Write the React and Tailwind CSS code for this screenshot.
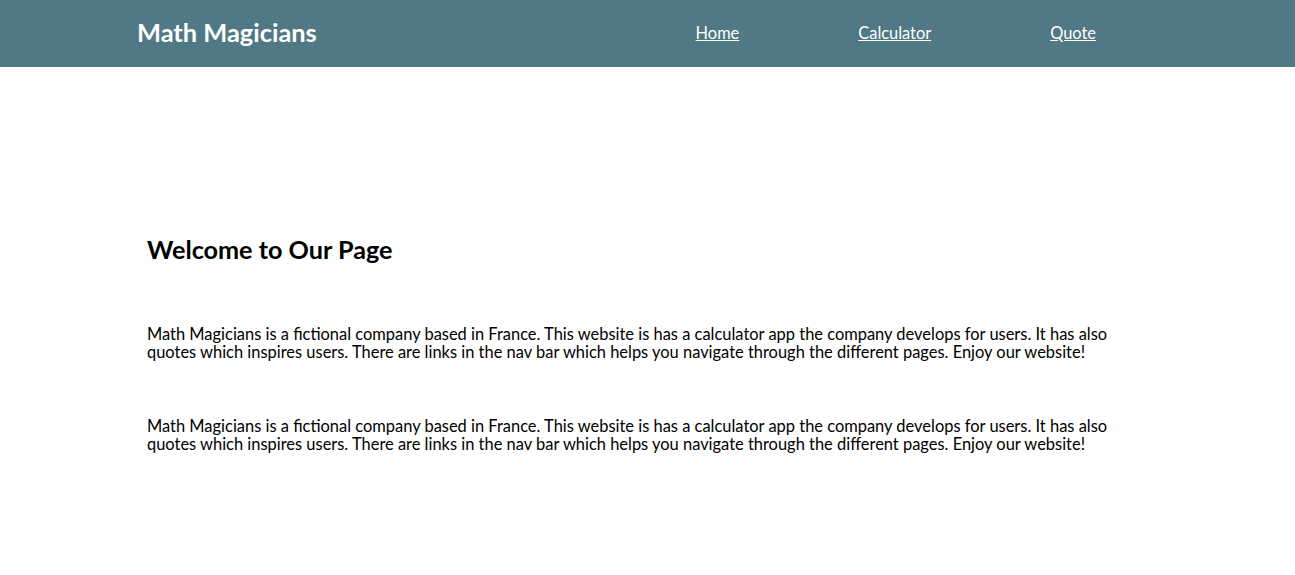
import React from "react";

const text =
  "Math Magicians is a fictional company based in France. This website is has a calculator app the company develops for users. It has also quotes which inspires users. There are links in the nav bar which helps you navigate through the different pages. Enjoy our website!";

function Navbar() {
  return (
    <header className="h-[67px] bg-[#507985] flex items-center pl-[137px] pr-[199px]">
      <h1 className="text-[25.4px] font-bold text-white leading-none -mt-[2px]">Math Magicians</h1>
      <nav className="ml-auto flex items-center gap-[119px] text-[16.4px] text-white -mt-[1px]">
        <a href="#" className="underline">Home</a>
        <a href="#" className="underline">Calculator</a>
        <a href="#" className="underline">Quote</a>
      </nav>
    </header>
  );
}

export default function App() {
  return (
    <div className="min-h-[575px] bg-white font-['Lato',sans-serif] text-black">
      <Navbar />
      <main className="pl-[147px] pr-[170px] pt-[168px]">
        <h2 className="text-[25.2px] font-bold leading-[28px]">Welcome to Our Page</h2>
        <p className="mt-[62px] text-[16.45px] leading-[18px] max-w-[975px]">{text}</p>
        <p className="mt-[56px] text-[16.45px] leading-[18px] max-w-[975px]">{text}</p>
      </main>
    </div>
  );
}
